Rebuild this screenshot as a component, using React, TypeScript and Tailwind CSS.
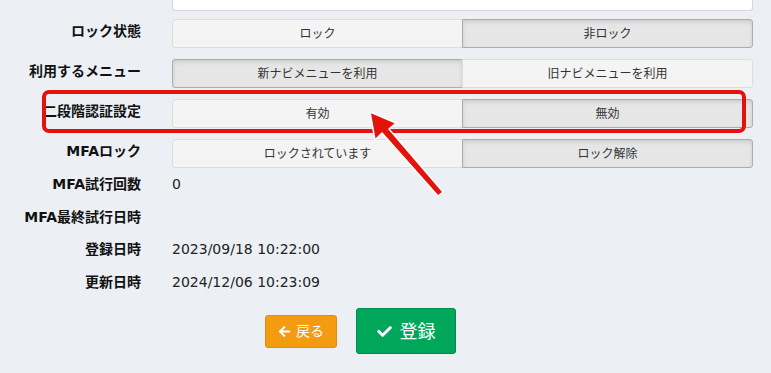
import { FaArrowLeft, FaCheck } from "react-icons/fa";

const jp = { fontFamily: '"DejaVu Sans", "Noto Sans CJK JP", sans-serif' };

function Toggle({ left, right, active }: { left: string; right: string; active: "left" | "right" }) {
  const on = "bg-[#e6e6e6] border-[#adadad] shadow-[inset_0_2px_4px_rgba(0,0,0,0.12)]";
  const off = "bg-[#f4f4f4] border-[#dddddd]";
  return (
    <div className="flex h-[29px] w-[581px] text-[12px] text-[#333]">
      <div
        className={`flex flex-1 items-center justify-center rounded-l-[3px] border ${active === "left" ? on : off}`}
      >
        {left}
      </div>
      <div
        className={`-ml-px flex flex-1 items-center justify-center rounded-r-[3px] border ${active === "right" ? on : off}`}
      >
        {right}
      </div>
    </div>
  );
}

function ToggleRow({ label, ...rest }: { label: string; left: string; right: string; active: "left" | "right" }) {
  return (
    <div className="flex">
      <div className="w-[141px] pt-[2px] text-right text-[14px] font-bold leading-[20px] text-[#111]">{label}</div>
      <div className="ml-[31px]">
        <Toggle {...rest} />
      </div>
    </div>
  );
}

function TextRow({ label, value }: { label: string; value?: string }) {
  return (
    <div className="flex h-[20px] items-center leading-[20px]">
      <div className="w-[141px] text-right text-[14px] font-bold text-[#111]">{label}</div>
      <div className="ml-[31px] text-[14px] text-[#222]">{value}</div>
    </div>
  );
}

export default function App() {
  return (
    <div className="relative h-[373px] w-[771px] overflow-hidden bg-[#ecf0f5]" style={jp}>
      <div className="ml-[172px] h-[11px] w-[581px] rounded-b-[3px] border border-t-0 border-[#d2d6de] bg-white" />

      <div className="mt-[8px] flex flex-col gap-[11px]">
        <ToggleRow label="ロック状態" left="ロック" right="非ロック" active="right" />
        <ToggleRow label="利用するメニュー" left="新ナビメニューを利用" right="旧ナビメニューを利用" active="left" />
        <ToggleRow label="二段階認証設定" left="有効" right="無効" active="right" />
        <ToggleRow label="MFAロック" left="ロックされています" right="ロック解除" active="right" />
      </div>

      <div className="mt-[6px] flex flex-col gap-[12.7px]">
        <TextRow label="MFA試行回数" value="0" />
        <TextRow label="MFA最終試行日時" />
        <TextRow label="登録日時" value="2023/09/18 10:22:00" />
        <TextRow label="更新日時" value="2024/12/06 10:23:09" />
      </div>

      <div className="mt-[16px] flex items-center gap-[19px] pl-[265px]">
        <button className="flex h-[33px] w-[72px] items-center justify-center gap-[5px] rounded-[3px] border border-[#e08e0b] bg-[#f39c12] text-[14px] text-white">
          <FaArrowLeft className="h-[13px] w-[13px]" />
          戻る
        </button>
        <button className="flex h-[46px] w-[100px] items-center justify-center gap-[8px] rounded-[3px] border border-[#008d4c] bg-[#00a65a] text-[18px] text-white">
          <FaCheck className="h-[15px] w-[15px]" />
          登録
        </button>
      </div>

      {/* annotation overlay */}
      <div className="pointer-events-none absolute left-[42px] top-[90px] h-[43px] w-[704px] rounded-[7px] border-[4px] border-[#e3120b]" />
      <svg className="pointer-events-none absolute left-0 top-0" width="771" height="373">
        <polygon
          points="370,112 396,123 389,129 443,192 438,196 382,133 375,140"
          fill="#e3120b"
          stroke="#ffffff"
          strokeWidth="1.5"
          strokeLinejoin="round"
        />
      </svg>
    </div>
  );
}
